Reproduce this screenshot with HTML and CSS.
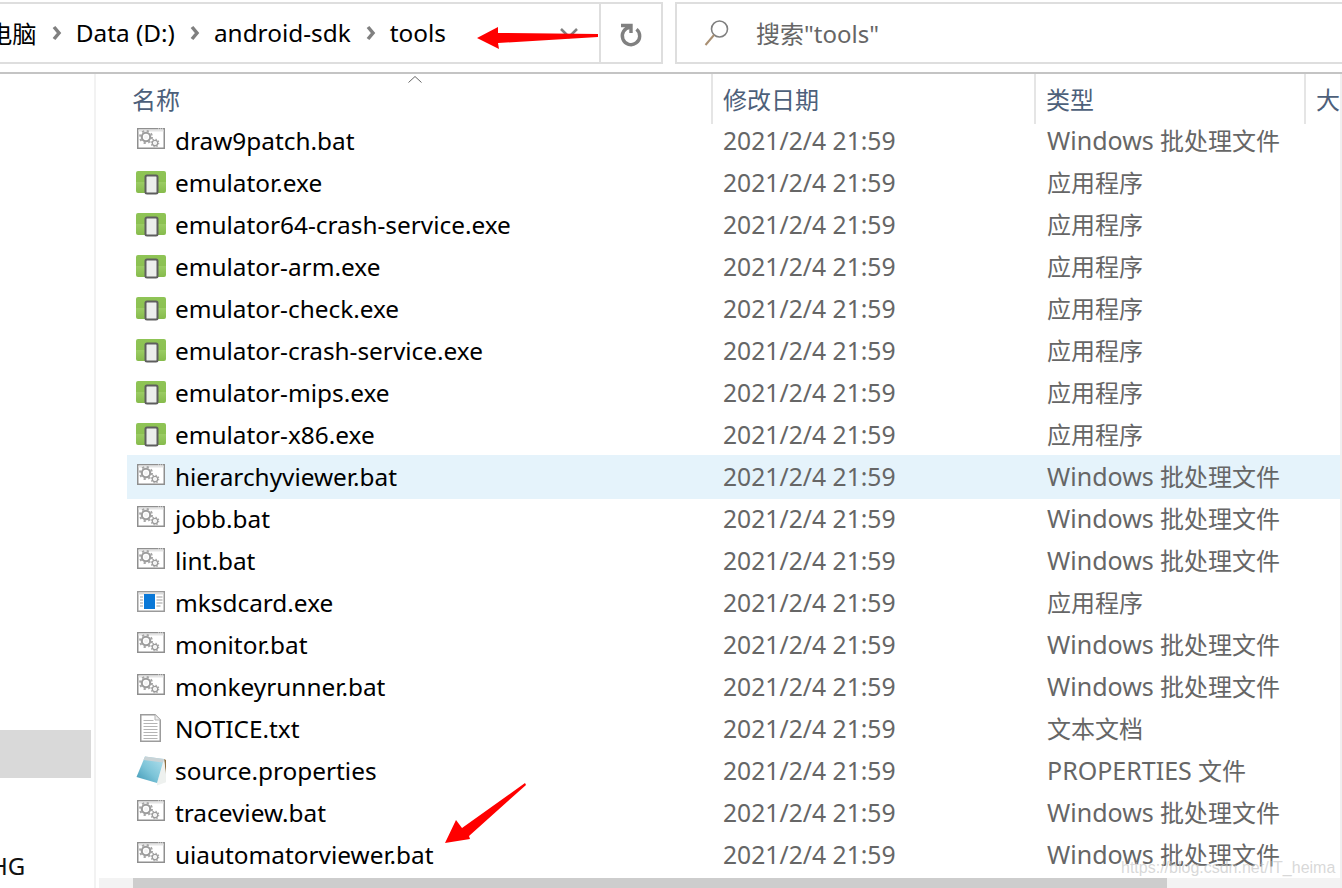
FILE: index.html
```html
<!DOCTYPE html>
<html lang="zh-CN">
<head>
<meta charset="utf-8">
<title>tools</title>
<link rel="stylesheet" href="styles.css">
</head>
<body>
<svg class="defs" width="0" height="0" aria-hidden="true">
  <defs>
    <linearGradient id="cover" x1="1" y1="0" x2="0" y2="1">
      <stop offset="0" stop-color="#b5e2ee"/>
      <stop offset=".55" stop-color="#7cc4d8"/>
      <stop offset="1" stop-color="#3f97b5"/>
    </linearGradient>
    <linearGradient id="green" x1="0" y1="0" x2="0" y2="1">
      <stop offset="0" stop-color="#8fc456"/>
      <stop offset=".5" stop-color="#8cc152"/>
      <stop offset=".5" stop-color="#9bcc64"/>
      <stop offset="1" stop-color="#86bb4c"/>
    </linearGradient>
  </defs>
  <symbol id="gear" viewBox="0 0 16 16">
    <circle cx="8" cy="8" r="4.800" fill="none" stroke="#9c9c9c" stroke-width="2.400"/>
    <circle cx="8" cy="8" r="6.800" fill="none" stroke="#a6a6a6" stroke-width="2.400" stroke-dasharray="2.500 2.840"/>
    <circle cx="8" cy="8" r="2.400" fill="#f4f4f4"/>
  </symbol>
  <symbol id="bat" viewBox="-1 -2 30 30">
    <rect x=".75" y=".75" width="26.500" height="19.500" fill="#fff" stroke="#8f8f8f" stroke-width="1.500"/>
    <rect x="1.500" y="1.500" width="25" height="2" fill="#e4e4e4"/>
    <path d="M21 1h1M23 1h1M25 1h1" stroke="#e8e8e8"/>
    <use href="#gear" x="2" y="2" width="14" height="14"/>
    <use href="#gear" x="13.500" y="10.500" width="9" height="9"/>
  </symbol>
  <symbol id="emu" viewBox="0 -3 30 30">
    <rect x="0" y="0" width="30" height="22" rx="2" fill="url(#green)"/>
    <rect x="9.500" y="4.500" width="12" height="18" rx="1.500" fill="#eceeec" stroke="#5e5e5e" stroke-width="2"/>
  </symbol>
  <symbol id="app" viewBox="-1 -3 30 30">
    <rect x=".75" y=".75" width="26.500" height="19.500" fill="#fff" stroke="#9a9a9a" stroke-width="1.500"/>
    <rect x="1.500" y="1.500" width="25" height="2" fill="#dcdcdc"/>
    <rect x="7" y="3" width="11" height="15" fill="#0a78d7"/>
    <path d="M3 6h3M3 9h3M3 12h3M3 15h3M19.500 6h6M19.500 9h6M19.500 12h6M19.500 15h4" stroke="#9d9d9d"/>
  </symbol>
  <symbol id="txt" viewBox="-4 0 30 30">
    <path d="M.75.75H15L20.250 6V27.250H.75Z" fill="#fff" stroke="#9c9c9c" stroke-width="1.500"/>
    <path d="M15 .75V6H20.250" fill="#eee" stroke="#b5b5b5"/>
    <path d="M3.500 6.500h10M3.500 9.500h14M3.500 12.500h14M3.500 15.500h14M3.500 18.500h14M3.500 21.500h14M3.500 24.500h14" stroke="#b4b4b4"/>
  </symbol>
  <symbol id="note" viewBox="-2 0 30 30">
    <path d="M26 3 28 4 30 25 28.500 26Z" fill="#8d6f42"/>
    <path d="M26 3 29 26 19 29.500 19 27Z" fill="#eef1ef"/>
    <path d="M7 .5 26 3 19 27-1.500 21Z" fill="url(#cover)"/>
    <path d="M7 .5 26 3 25 6.500 5.500 4Z" fill="#c9d3d6"/>
  </symbol>
</svg>

<div class="window">
  <header class="toolbar">
    <div class="address">
      <nav class="crumbs">
        <span>电脑</span>
        <svg class="sep" viewBox="0 0 11 16"><path d="M3 2l5 6-5 6" /></svg>
        <span>Data (D:)</span>
        <svg class="sep" viewBox="0 0 11 16"><path d="M3 2l5 6-5 6" /></svg>
        <span>android-sdk</span>
        <svg class="sep" viewBox="0 0 11 16"><path d="M3 2l5 6-5 6" /></svg>
        <span>tools</span>
      </nav>
      <svg class="drop" viewBox="0 0 20 12"><path d="M2 2l8 8 8-8"/></svg>
      <div class="refresh">
        <svg viewBox="0 0 24 26"><path d="M17.500 7.200A8.700 8.700 0 1 1 11 5.300"/><path d="M2 3.500H12V11"/></svg>
      </div>
    </div>
    <div class="search">
      <svg viewBox="0 0 26 28"><circle cx="15.500" cy="10" r="8" class="lens"/><path d="M10 16 1.500 26" class="handle"/></svg>
      <span>搜索"tools"</span>
    </div>
  </header>

  <div class="content">
    <aside class="sidebar">
      <div class="nav-selected"></div>
      <div class="nav-label">HG</div>
    </aside>

    <main class="files">
      <svg class="sort" viewBox="0 0 14 7"><path d="M.5 6.500 7 .5l6.500 6"/></svg>
      <div class="head">
        <div class="hname">名称</div>
        <div class="hcell">修改日期</div>
        <div class="hcell">类型</div>
        <div class="hcell">大</div>
      </div>
      <div class="list">
        <div class="row"><svg class="ico"><use href="#bat"/></svg><span class="name">draw9patch.bat</span><span class="date">2021/2/4 21:59</span><span class="type"><span class="lat">Windows</span> 批处理文件</span></div>
        <div class="row"><svg class="ico"><use href="#emu"/></svg><span class="name">emulator.exe</span><span class="date">2021/2/4 21:59</span><span class="type">应用程序</span></div>
        <div class="row"><svg class="ico"><use href="#emu"/></svg><span class="name">emulator64-crash-service.exe</span><span class="date">2021/2/4 21:59</span><span class="type">应用程序</span></div>
        <div class="row"><svg class="ico"><use href="#emu"/></svg><span class="name">emulator-arm.exe</span><span class="date">2021/2/4 21:59</span><span class="type">应用程序</span></div>
        <div class="row"><svg class="ico"><use href="#emu"/></svg><span class="name">emulator-check.exe</span><span class="date">2021/2/4 21:59</span><span class="type">应用程序</span></div>
        <div class="row"><svg class="ico"><use href="#emu"/></svg><span class="name">emulator-crash-service.exe</span><span class="date">2021/2/4 21:59</span><span class="type">应用程序</span></div>
        <div class="row"><svg class="ico"><use href="#emu"/></svg><span class="name">emulator-mips.exe</span><span class="date">2021/2/4 21:59</span><span class="type">应用程序</span></div>
        <div class="row"><svg class="ico"><use href="#emu"/></svg><span class="name">emulator-x86.exe</span><span class="date">2021/2/4 21:59</span><span class="type">应用程序</span></div>
        <div class="row hover"><svg class="ico"><use href="#bat"/></svg><span class="name">hierarchyviewer.bat</span><span class="date">2021/2/4 21:59</span><span class="type"><span class="lat">Windows</span> 批处理文件</span></div>
        <div class="row"><svg class="ico"><use href="#bat"/></svg><span class="name">jobb.bat</span><span class="date">2021/2/4 21:59</span><span class="type"><span class="lat">Windows</span> 批处理文件</span></div>
        <div class="row"><svg class="ico"><use href="#bat"/></svg><span class="name">lint.bat</span><span class="date">2021/2/4 21:59</span><span class="type"><span class="lat">Windows</span> 批处理文件</span></div>
        <div class="row"><svg class="ico"><use href="#app"/></svg><span class="name">mksdcard.exe</span><span class="date">2021/2/4 21:59</span><span class="type">应用程序</span></div>
        <div class="row"><svg class="ico"><use href="#bat"/></svg><span class="name">monitor.bat</span><span class="date">2021/2/4 21:59</span><span class="type"><span class="lat">Windows</span> 批处理文件</span></div>
        <div class="row"><svg class="ico"><use href="#bat"/></svg><span class="name">monkeyrunner.bat</span><span class="date">2021/2/4 21:59</span><span class="type"><span class="lat">Windows</span> 批处理文件</span></div>
        <div class="row"><svg class="ico"><use href="#txt"/></svg><span class="name">NOTICE.txt</span><span class="date">2021/2/4 21:59</span><span class="type">文本文档</span></div>
        <div class="row"><svg class="ico"><use href="#note"/></svg><span class="name">source.properties</span><span class="date">2021/2/4 21:59</span><span class="type"><span class="lat">PROPERTIES</span> 文件</span></div>
        <div class="row"><svg class="ico"><use href="#bat"/></svg><span class="name">traceview.bat</span><span class="date">2021/2/4 21:59</span><span class="type"><span class="lat">Windows</span> 批处理文件</span></div>
        <div class="row"><svg class="ico"><use href="#bat"/></svg><span class="name">uiautomatorviewer.bat</span><span class="date">2021/2/4 21:59</span><span class="type"><span class="lat">Windows</span> 批处理文件</span></div>
      </div>
      <div class="hscroll"><div class="thumb"></div></div>
    </main>
    <div class="vscroll"></div>
  </div>

  <svg class="arrow arrow-top" viewBox="0 0 122 22"><path d="M0 11 21 0 21 6 121 7 121 10 21 16 22 22Z"/></svg>
  <svg class="arrow arrow-bottom" viewBox="0 0 82 62"><path d="M0 60 11 37 17 45 80 0 81 2 24 53 25 56Z"/></svg>
  <div class="watermark">https://blog.csdn.net/IT_heima</div>
</div>
</body>
</html>
```

FILE: styles.css
```css
* { box-sizing: border-box; }
html, body { margin: 0; height: 100%; background: #fff; overflow: hidden; }
body { font-family: "Noto Sans", "Noto Sans CJK SC", sans-serif; font-size: 24px; color: #000; }
.defs { position: absolute; }

.window { position: relative; width: 1342px; height: 888px; display: flex; flex-direction: column; overflow: hidden; }

/* toolbar */
.toolbar { flex: none; height: 74px; padding-top: 2px; border-bottom: 2px solid #c4c4c4; display: flex; gap: 12px; }
.address { width: 663px; height: 62px; border: 2px solid #dedede; border-left: 0; display: flex; align-items: center; }
.crumbs { flex: 1; margin-left: -12px; padding-bottom: 2px; display: flex; align-items: center; white-space: nowrap; font-size: 24.360px; }
.sep { width: 11px; height: 16px; margin: 2px 14px 0; fill: none; stroke: #808080; stroke-width: 3.500; flex: none; }
.drop { width: 20px; height: 12px; margin-right: 20px; fill: none; stroke: #808080; stroke-width: 2.500; }
.refresh { width: 62px; height: 100%; border-left: 2px solid #dedede; padding-top: 4px; display: flex; align-items: center; justify-content: center; }
.refresh svg { width: 24px; height: 26px; fill: none; stroke: #808080; stroke-width: 3.400; }
.search { flex: 1; height: 62px; border: 2px solid #dedede; border-right: 0; padding-left: 27px; display: flex; align-items: center; gap: 26px; color: #666; }
.search span { margin-top: -2px; }
.search svg { width: 26px; height: 28px; fill: none; flex: none; }
.lens { stroke: #808080; stroke-width: 1.600; }
.handle { stroke: #a98f72; stroke-width: 2; }

/* content */
.content { flex: 1; min-height: 0; display: flex; }
.sidebar { width: 96px; flex: none; border-right: 2px solid #f2f2f2; padding-bottom: 4px; display: flex; flex-direction: column; justify-content: flex-end; }
.nav-selected { width: 91px; height: 48px; background: #d9d9d9; margin-bottom: 70px; }
.nav-label { margin-left: -10px; height: 36px; line-height: 36px; white-space: nowrap; color: #111; }

.files { position: relative; flex: 1; min-width: 0; display: flex; flex-direction: column; }
.sort { position: absolute; left: 312px; top: 2px; width: 14px; height: 7px; fill: none; stroke: #666; stroke-width: 1; }

.head { height: 50px; margin-bottom: -4px; margin-left: 31px; display: grid; grid-template-columns: 584px 323px 270px 1fr; color: #4d607a; overflow: hidden; }
.hname { padding-left: 5px; padding-top: 8px; line-height: 36px; }
.hcell { border-left: 2px solid #e5e5e5; padding-left: 10px; padding-top: 8px; line-height: 36px; white-space: nowrap; overflow: hidden; }

.list { flex: 1; margin-left: 31px; }
.row { height: 42px; display: grid; grid-template-columns: 48px 548px 324px 1fr; align-items: center; white-space: nowrap; }
.row.hover { background: #e5f3fb; height: 44px; margin: -1px 0; }
.ico { width: 30px; height: 30px; margin-left: 9px; }
.name, .date { margin-top: -2px; }
.type { margin-top: -4px; }
.name { color: #000; font-size: 24.360px; }
.date { color: #666; font-size: 24.700px; }
.type { color: #666; }
.lat { font-size: 25px; }

.hscroll { flex: none; height: 10px; margin-left: 3px; background: #f3f3f3; padding-left: 34px; }
.thumb { width: 1034px; height: 100%; background: #cdcdcd; }
.vscroll { width: 2px; flex: none; background: #f0f0f0; }

/* annotations */
.arrow { position: absolute; fill: #f00; }
.arrow-top { left: 477px; top: 27px; width: 122px; height: 22px; }
.arrow-bottom { left: 445px; top: 783px; width: 82px; height: 62px; }
.watermark { position: absolute; left: 1121px; top: 857px; font-family: "Liberation Sans", sans-serif; font-size: 16px; line-height: 22px; color: rgba(190,190,190,.6); white-space: nowrap; }
```
